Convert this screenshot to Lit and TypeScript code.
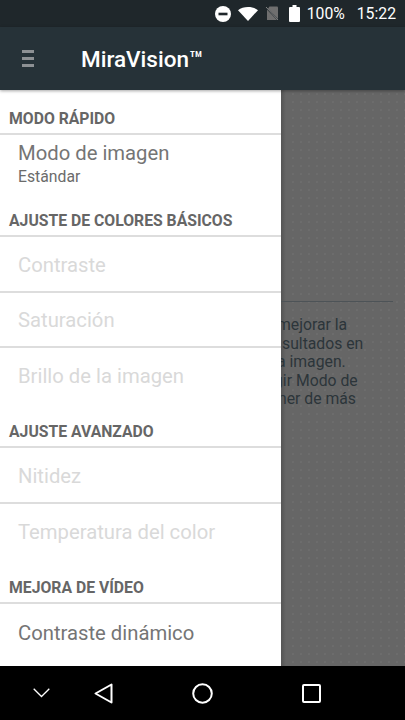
import { LitElement, html, css } from "lit";
import { customElement } from "lit/decorators.js";

type Row = { t: string; sub?: string; off?: boolean };
type Section = { h: string; rows: Row[] };

const SECTIONS: Section[] = [
  { h: "MODO RÁPIDO", rows: [{ t: "Modo de imagen", sub: "Estándar" }] },
  {
    h: "AJUSTE DE COLORES BÁSICOS",
    rows: [
      { t: "Contraste", off: true },
      { t: "Saturación", off: true },
      { t: "Brillo de la imagen", off: true },
    ],
  },
  {
    h: "AJUSTE AVANZADO",
    rows: [
      { t: "Nitidez", off: true },
      { t: "Temperatura del color", off: true },
    ],
  },
  { h: "MEJORA DE VÍDEO", rows: [{ t: "Contraste dinámico" }] },
];

const BEHIND = [
  { t: "mejorar la", x: -4 },
  { t: "sultados en", x: 1 },
  { t: "a imagen.", x: -4 },
  { t: "gir Modo de", x: -7 },
  { t: "ner de más", x: -3 },
];

@customElement("app-root")
export class AppRoot extends LitElement {
  static styles = css`
    :host {
      display: flex;
      flex-direction: column;
      width: 405px;
      height: 720px;
      overflow: hidden;
      font-family: Roboto, "Liberation Sans", sans-serif;
      background: #666;
    }
    .status {
      flex: 0 0 27px;
      background: #1f272b;
      display: flex;
      align-items: center;
      justify-content: flex-end;
      color: #fff;
      font-size: 15.75px;
      padding-right: 9px;
      box-sizing: border-box;
    }
    .status svg { display: block; flex: none; }
    .dnd { margin-right: 7px; }
    .wifi { margin-right: 7px; }
    .sim { margin-right: 10px; }
    .batt { margin-right: 7px; }
    .pct { margin-right: 12px; }
    .bar {
      flex: 0 0 63px;
      background: #263238;
      display: flex;
      align-items: center;
      color: #fff;
      position: relative;
      z-index: 3;
      box-shadow: 0 1px 3px rgba(0, 0, 0, 0.35);
    }
    .menu { margin-left: 22px; display: block; }
    .title { margin-left: 47px; font-size: 22.5px; font-weight: 500; }
    .main { flex: 1; display: flex; min-height: 0; position: relative; }
    .drawer {
      flex: 0 0 281px;
      background: #fff;
      overflow: hidden;
      padding-top: 0.5px;
    }
    .head {
      height: 44.5px;
      box-sizing: border-box;
      padding: 0 0 5px 9px;
      display: flex;
      align-items: flex-end;
      font-size: 15.75px;
      font-weight: 700;
      color: #666;
      border-bottom: 2px solid #ddd;
      line-height: 18px;
    }
    .row {
      height: 55.5px;
      box-sizing: border-box;
      padding: 2px 0 0 18px;
      display: flex;
      align-items: center;
      font-size: 20.25px;
      color: #757575;
      border-bottom: 2px solid #ddd;
    }
    .row:last-child { border-bottom: 0; }
    .row:nth-child(4) { padding-top: 0; }
    .section:last-child .row { padding-top: 3px; }
    .row.off { color: #d9d9d9; }
    .row.two { display: block; height: 57.5px; padding-top: 6px; border: 0; }
    .row.two .t { line-height: 24px; }
    .row.two .s { font-size: 15.75px; line-height: 18px; margin-top: 3px; color: #6b6b6b; }
    .behind {
      flex: 1;
      background-color: #666;
      background-image: radial-gradient(circle, #6c6c6c 0.7px, transparent 0.9px);
      background-size: 8px 8px;
      overflow: hidden;
      position: relative;
      padding-top: 211px;
      color: #2c353a;
      font-size: 15.75px;
    }
    .shade {
      position: absolute;
      left: 0; top: 0; bottom: 0;
      width: 5px;
      background: linear-gradient(to right, #555, #666);
    }
    .rule { position: relative; height: 1px; margin-right: 12px; background: #4d5357; margin-bottom: 14px; }
    .line { position: relative; white-space: nowrap; line-height: 18.6px; }
    .nav {
      flex: 0 0 54px;
      background: #000;
      position: relative;
      z-index: 3;
      display: flex;
      align-items: center;
    }
    .nav svg { display: block; flex: none; }
    .chev { margin-left: 33px; }
    .back { margin-left: 44px; }
    .home { margin-left: 79px; }
    .recent { margin-left: 89px; }
  `;

  render() {
    return html`
      <div class="status">
        <svg class="dnd" width="16" height="16" viewBox="0 0 16 16"><circle cx="8" cy="8" r="8" fill="#fff"/><rect x="3.5" y="6.7" width="9" height="2.6" fill="#1f272b"/></svg>
        <svg class="wifi" width="20" height="14" viewBox="0 0 20 14"><path d="M0 3.2C2.8 1.1 6.2 0 10 0s7.200 1.100 10 3.200L10 14z" fill="#fff"/></svg>
        <svg class="sim" width="14" height="15" viewBox="0 0 14 15"><path d="M4.500 .5h7.500a1 1 0 0 1 1 1V14H2V4z" fill="#6f6f6f"/><path d="M.5 1 13.500 14.500" stroke="#1f272b" stroke-width="1.500"/><path d="M1 1 13 14" stroke="#9a9a9a" stroke-width=".8"/></svg>
        <svg class="batt" width="11" height="17" viewBox="0 0 11 17"><path d="M3.500 0h4v2H10a1 1 0 0 1 1 1v13a1 1 0 0 1-1 1H1a1 1 0 0 1-1-1V3a1 1 0 0 1 1-1h2.500z" fill="#fff"/></svg>
        <span class="pct">100%</span>
        <span>15:22</span>
      </div>
      <div class="bar">
        <svg class="menu" width="12" height="17" viewBox="0 0 12 17"><g fill="#8d9194"><rect y="0" width="12" height="3"/><rect y="7" width="12" height="3"/><rect y="14" width="12" height="3"/></g></svg>
        <span class="title">MiraVision™</span>
      </div>
      <div class="main">
        <div class="drawer">
          ${SECTIONS.map(
            (s) => html`
              <div class="section">
                <div class="head">${s.h}</div>
                ${s.rows.map((r) =>
                  r.sub
                    ? html`<div class="row two"><div class="t">${r.t}</div><div class="s">${r.sub}</div></div>`
                    : html`<div class="row ${r.off ? "off" : ""}">${r.t}</div>`
                )}
              </div>
            `
          )}
        </div>
        <div class="behind">
          <div class="shade"></div>
          <div class="rule"></div>
          ${BEHIND.map((l) => html`<div class="line" style="margin-left:${l.x}px">${l.t}</div>`)}
        </div>
      </div>
      <div class="nav">
        <svg class="chev" width="17" height="10" viewBox="0 0 17 10"><path d="M.7 .7 8.500 8.500 16.300 .7" fill="none" stroke="#fff" stroke-width="1.300"/></svg>
        <svg class="back" width="19" height="21" viewBox="0 0 19 21"><path d="M17.500 1.500V19.500L1.500 10.500z" fill="none" stroke="#fff" stroke-width="2" stroke-linejoin="round"/></svg>
        <svg class="home" width="21" height="21" viewBox="0 0 21 21"><circle cx="10.500" cy="10.500" r="9.300" fill="none" stroke="#fff" stroke-width="2"/></svg>
        <svg class="recent" width="19" height="19" viewBox="0 0 19 19"><rect x="1" y="1" width="17" height="17" rx="1" fill="none" stroke="#fff" stroke-width="2"/></svg>
      </div>
    `;
  }
}
